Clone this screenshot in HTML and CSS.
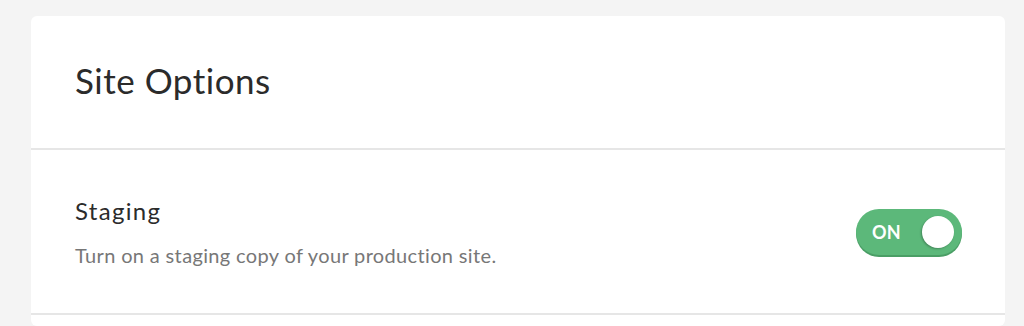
FILE: index.html
```html
<!DOCTYPE html>
<html lang="en">
<head>
    <meta charset="UTF-8">
    <meta name="viewport" content="width=device-width, initial-scale=1.0">
    <title>Site Options</title>
    <link rel="stylesheet" href="styles.css">
</head>
<body>
    <div class="card">
        <!-- Header -->
        <div class="card-header">
            <h1>Site Options</h1>
        </div>

        <!-- Staging option -->
        <div class="option-row">
            <div class="option-text">
                <h2>Staging</h2>
                <p>Turn on a staging copy of your production site.</p>
            </div>
            <div class="toggle on">
                <span class="toggle-label">ON</span>
                <span class="toggle-knob"></span>
            </div>
        </div>

        <div class="option-row empty"></div>
    </div>
</body>
</html>
```

FILE: styles.css
```css
/* Styles for the page */
body {
    font-family: 'Lato', sans-serif;
    background: #f4f4f4;
    margin: 0;
    padding: 16px 19px 0 31px;
    color: #2b2b2b;
}

.card {
    background: #ffffff;
    border-radius: 6px;
}

.card-header {
    height: 132px;
    display: flex;
    align-items: center;
    padding: 0 44px;
    border-bottom: 2px solid #e6e6e6;
}

.card-header h1 {
    margin: -5px 0 0;
    font-size: 35px;
    line-height: 42px;
    font-weight: 400;
    color: #2b2b2b;
    letter-spacing: 0.5px;
}

.option-row {
    height: 163px;
    display: flex;
    align-items: center;
    justify-content: space-between;
    padding: 0 43px 0 44px;
    border-bottom: 2px solid #e6e6e6;
}

.option-row.empty {
    border-bottom: none;
    height: 11px;
}

.option-text h2 {
    margin: 0 0 18px;
    font-size: 24px;
    line-height: 28px;
    font-weight: 400;
    letter-spacing: 1.3px;
    color: #2b2b2b;
}

.option-text p {
    margin: 0;
    font-size: 20px;
    line-height: 24px;
    letter-spacing: 0.35px;
    color: #777777;
}

.toggle {
    width: 106px;
    height: 46px;
    border-radius: 23px;
    background: #5cb87a;
    box-shadow: 0 2px 0 #4a9e65;
    display: flex;
    align-items: center;
    justify-content: space-between;
    padding: 0 8px 0 16px;
    box-sizing: border-box;
}

.toggle-label {
    color: #fff;
    font-weight: 700;
    font-size: 18px;
    letter-spacing: 0.3px;
}

.toggle-knob {
    width: 32px;
    height: 32px;
    border-radius: 50%;
    background: #fff;
    box-shadow: -1px 1px 2px rgba(0, 0, 0, 0.25);
}
```
